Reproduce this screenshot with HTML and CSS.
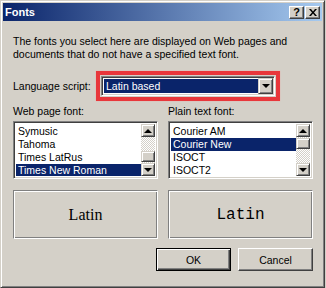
FILE: index.html
```html
<!DOCTYPE html>
<html lang="en">
<head>
    <meta charset="UTF-8">
    <title>Fonts</title>
    <link rel="stylesheet" href="styles.css">
</head>
<body>
    <div class="dialog">
        <div class="titlebar">
            <span class="title">Fonts</span>
            <div class="caption-buttons">
                <div class="cap-btn help">?</div>
                <div class="cap-btn close">
                    <svg width="8" height="7" viewBox="0 0 8 7"><path d="M0 0h2l2 2.5L6 0h2L5 3.5 8 7H6L4 4.5 2 7H0l3-3.5z" fill="#000"/></svg>
                </div>
            </div>
        </div>
        <div class="content">
            <p class="desc">The fonts you select here are displayed on Web pages and documents that do not have a specified text font.</p>

            <div class="lang-row">
                <span class="lang-label">Language script:</span>
                <div class="highlight">
                    <div class="combo">
                        <span class="combo-value">Latin based</span>
                        <div class="btn3d combo-btn"><i class="arrow down"></i></div>
                    </div>
                </div>
            </div>

            <div class="columns">
                <div class="col">
                    <div class="col-label">Web page font:</div>
                    <div class="listbox">
                        <div class="items">
                            <div class="item">Symusic</div>
                            <div class="item">Tahoma</div>
                            <div class="item">Times LatRus</div>
                            <div class="item selected">Times New Roman</div>
                        </div>
                        <div class="scrollbar">
                            <div class="btn3d sb-btn"><i class="arrow up"></i></div>
                            <div class="track thumb-bottom"><div class="btn3d thumb"></div></div>
                            <div class="btn3d sb-btn"><i class="arrow down"></i></div>
                        </div>
                    </div>
                    <div class="preview serif">Latin</div>
                </div>
                <div class="col">
                    <div class="col-label">Plain text font:</div>
                    <div class="listbox">
                        <div class="items">
                            <div class="item">Courier AM</div>
                            <div class="item selected">Courier New</div>
                            <div class="item">ISOCT</div>
                            <div class="item">ISOCT2</div>
                        </div>
                        <div class="scrollbar">
                            <div class="btn3d sb-btn"><i class="arrow up"></i></div>
                            <div class="track"><div class="btn3d thumb"></div></div>
                            <div class="btn3d sb-btn"><i class="arrow down"></i></div>
                        </div>
                    </div>
                    <div class="preview mono">Latin</div>
                </div>
            </div>

            <div class="actions">
                <div class="button default">OK</div>
                <div class="button">Cancel</div>
            </div>
        </div>
    </div>
</body>
</html>
```

FILE: styles.css
```css
body {
    margin: 0;
    background: #D4D0C8;
    font-family: 'Liberation Sans', Arial, sans-serif;
    font-size: 10.5px;
    color: #000;
}
.dialog {
    box-sizing: border-box;
    width: 325px;
    height: 288px;
    background: #D4D0C8;
    border: 1px solid;
    border-color: #D4D0C8 #404040 #404040 #D4D0C8;
    box-shadow: inset 1px 1px #fff, inset -1px -1px #808080;
    padding: 2px;
}
.titlebar {
    height: 18px;
    background: linear-gradient(to right, #0A246A, #A6CAF0);
    display: flex;
    align-items: center;
    justify-content: space-between;
    padding: 0 2px 0 2px;
}
.title {
    color: #fff;
    font-weight: bold;
    font-size: 11px;
}
.caption-buttons {
    display: flex;
    gap: 1px;
}
.cap-btn {
    box-sizing: border-box;
    width: 15px;
    height: 13px;
    background: #D4D0C8;
    border: 1px solid;
    border-color: #fff #404040 #404040 #fff;
    box-shadow: inset -1px -1px #808080;
    display: flex;
    align-items: center;
    justify-content: center;
    font-weight: bold;
    font-size: 11px;
    line-height: 11px;
}
.content {
    padding: 0 9px 0 10px;
}
.desc {
    margin: 14px 0 0;
    line-height: 13px;
}
.lang-row {
    display: flex;
    align-items: center;
    margin-top: 10px;
}
.lang-label {
    width: 83px;
}
.highlight {
    box-sizing: border-box;
    width: 184px;
    height: 30px;
    border: 4px solid #E8373B;
    box-shadow: 0 0 1px #F29A9A;
    padding: 1px;
}
.combo {
    box-sizing: border-box;
    height: 20px;
    border: 1px solid;
    border-color: #808080 #fff #fff #808080;
    box-shadow: inset 1px 1px #404040, inset -1px -1px #D4D0C8;
    background: #fff;
    padding: 2px;
    display: flex;
}
.combo-value {
    flex: 1;
    background: #0A246A;
    color: #fff;
    line-height: 14px;
    padding-left: 2px;
}
.btn3d {
    box-sizing: border-box;
    background: #D4D0C8;
    border: 1px solid;
    border-color: #D4D0C8 #404040 #404040 #D4D0C8;
    box-shadow: inset 1px 1px #fff, inset -1px -1px #808080;
    display: flex;
    align-items: center;
    justify-content: center;
}
.combo-btn {
    width: 15px;
    margin: -1px -1px -1px 0;
    height: 16px;
}
.arrow {
    width: 0;
    height: 0;
    border-left: 4px solid transparent;
    border-right: 4px solid transparent;
}
.arrow.down {
    border-top: 4px solid #000;
}
.arrow.up {
    border-bottom: 4px solid #000;
}
.columns {
    display: flex;
    gap: 10px;
    margin-top: 4px;
}
.col {
    width: 145px;
}
.col-label {
    line-height: 13px;
    margin-bottom: 3px;
}
.listbox {
    box-sizing: border-box;
    height: 58px;
    border: 1px solid;
    border-color: #808080 #fff #fff #808080;
    box-shadow: inset 1px 1px #404040, inset -1px -1px #D4D0C8;
    background: #fff;
    padding: 2px;
    display: flex;
}
.items {
    flex: 1;
    padding-top: 1px;
    overflow: hidden;
}
.item {
    height: 13px;
    line-height: 13px;
    padding-left: 2px;
    white-space: nowrap;
}
.item.selected {
    background: #0A246A;
    color: #fff;
}
.scrollbar {
    width: 14px;
    display: flex;
    flex-direction: column;
}
.sb-btn {
    height: 13px;
}
.track {
    flex: 1;
    background: repeating-conic-gradient(#fff 0 25%, #D4D0C8 0 50%) 0 0 / 2px 2px;
    display: flex;
    flex-direction: column;
    padding: 1px 0;
}
.track.thumb-bottom {
    justify-content: flex-end;
}
.thumb {
    height: 11px;
}
.preview {
    box-sizing: border-box;
    height: 49px;
    margin-top: 11px;
    border: 1px solid;
    border-color: #808080 #fff #fff #808080;
    box-shadow: inset 1px 1px #fff, inset -1px -1px #808080;
    display: flex;
    align-items: center;
    justify-content: center;
    font-size: 16px;
}
.serif {
    font-family: 'Liberation Serif', 'Times New Roman', serif;
}
.mono {
    font-family: 'Liberation Mono', 'Courier New', monospace;
}
.actions {
    display: flex;
    justify-content: flex-end;
    gap: 7px;
    margin-top: 9px;
}
.button {
    box-sizing: border-box;
    width: 75px;
    height: 23px;
    background: #D4D0C8;
    border: 1px solid;
    border-color: #fff #404040 #404040 #fff;
    box-shadow: inset -1px -1px #808080;
    display: flex;
    align-items: center;
    justify-content: center;
}
.button.default {
    border: 1px solid #000;
    box-shadow: inset 1px 1px #fff, inset -1px -1px #404040, inset -2px -2px #808080;
}
```
